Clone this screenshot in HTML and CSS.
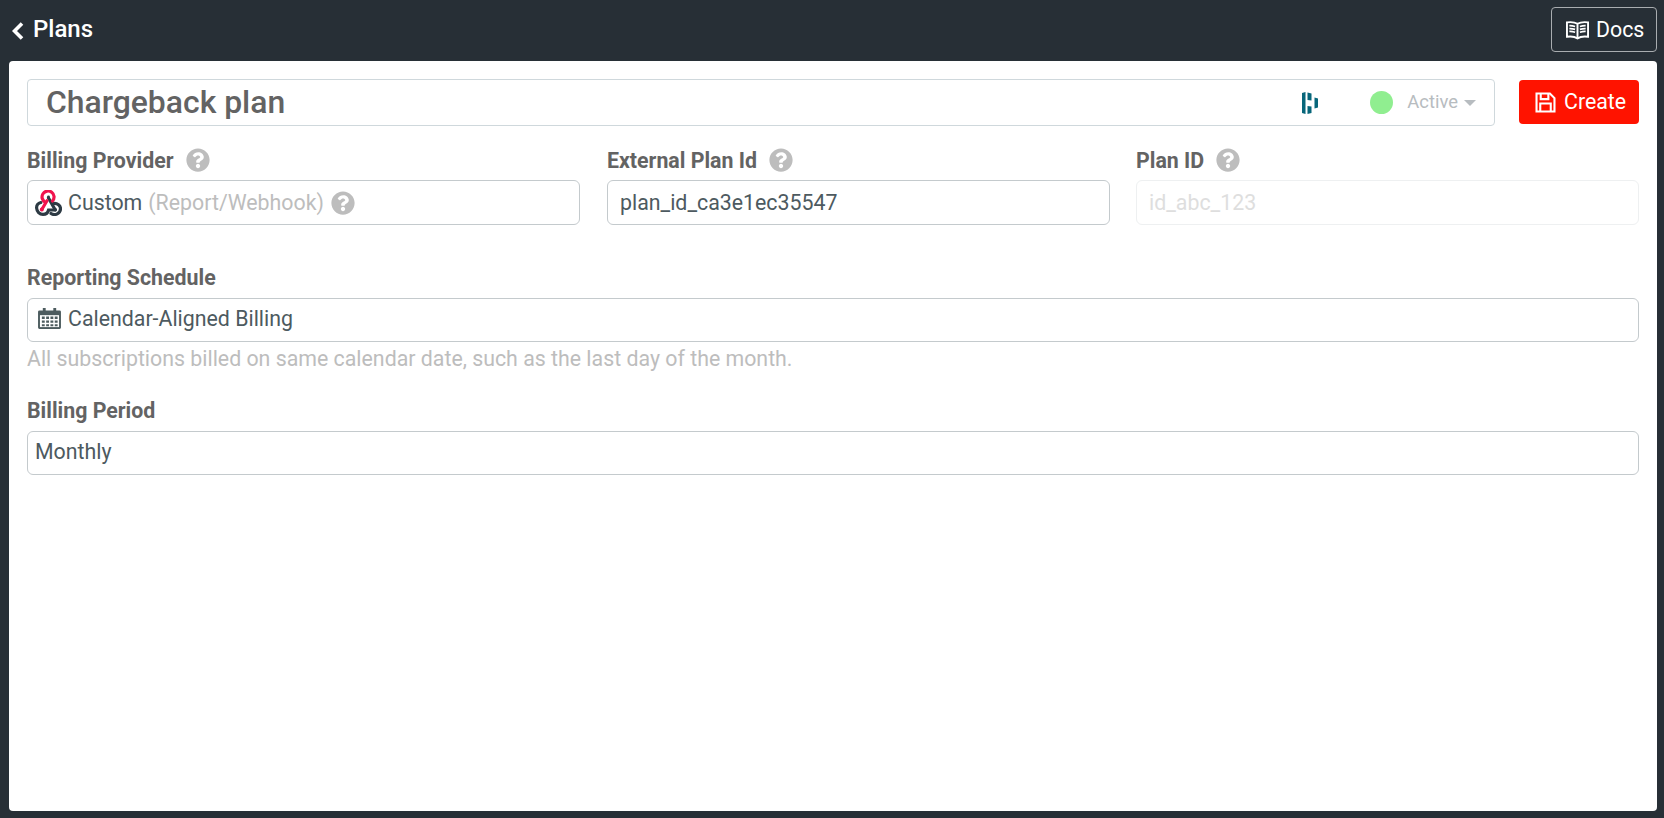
FILE: index.html
```html
<!DOCTYPE html>
<html lang="en">
<head>
<meta charset="utf-8">
<title>Chargeback plan</title>
<link rel="stylesheet" href="styles.css">
</head>
<body>
<svg class="defs" width="0" height="0" aria-hidden="true">
  <symbol id="q" viewBox="0 0 512 512"><path d="M504 256c0 136.997-111.043 248-248 248S8 392.997 8 256C8 119.083 119.043 8 256 8s248 111.083 248 248zM262.655 90c-54.497 0-89.255 22.957-116.549 63.758-3.536 5.286-2.353 12.415 2.715 16.258l34.699 26.31c5.205 3.947 12.621 3.008 16.665-2.122 17.864-22.658 30.113-35.797 57.303-35.797 20.429 0 45.698 13.148 45.698 32.958 0 14.976-12.363 22.667-32.534 33.976C247.128 238.528 216 254.941 216 296v4c0 6.627 5.373 12 12 12h56c6.627 0 12-5.373 12-12v-1.333c0-28.462 83.186-29.647 83.186-106.667 0-58.002-60.165-102-116.531-102zM256 338c-25.365 0-46 20.635-46 46 0 25.364 20.635 46 46 46s46-20.636 46-46c0-25.365-20.635-46-46-46z"/></symbol>
</svg>
<header class="topbar">
  <a class="back">
    <svg class="chev" viewBox="0 0 12 18"><path d="M10 1.500 2.500 9l7.500 7.500" fill="none" stroke="#fff" stroke-width="3.600"/></svg>
    <span>Plans</span>
  </a>
  <button class="docs">
    <svg class="book" viewBox="0 0 24 20" fill="none" stroke="#fff">
      <path d="M12 3.500C9.500 2 5 1.500 1 2v15c4-.5 8.500 0 11 1.800 2.500-1.800 7-2.300 11-1.800V2c-4-.5-8.500 0-11 1.500zM12 3.500v15" stroke-width="2"/>
      <path d="M3.500 5.500c2-.1 4 .2 6 .8M3.500 8.500c2-.1 4 .2 6 .8M3.500 11.500c2-.1 4 .2 6 .8M20.500 5.500c-2-.1-4 .2-6 .8M20.500 8.500c-2-.1-4 .2-6 .8M20.500 11.500c-2-.1-4 .2-6 .8" stroke-width="1.800"/>
    </svg>
    <span>Docs</span>
  </button>
</header>
<main class="card">
  <div class="title-row">
    <div class="title-box">
      <span class="title">Chargeback plan</span>
      <svg class="dash-logo" viewBox="0 0 16 22" fill="#07667a">
        <path d="M0 1l3.500-1v22L0 21z"/>
        <path d="M5.500 .5l4 1v7l-4-.5zM5.500 14l4 .5v6.500l-4 1z"/>
        <path d="M12.500 5.500l3.500 1v9l-3.500 1z"/>
      </svg>
      <span class="dot"></span>
      <span class="status">Active</span>
      <span class="caret"></span>
    </div>
    <button class="create">
      <svg class="save" viewBox="0 0 22 22" fill="none" stroke="#fff" stroke-width="2.200">
        <path d="M1.600 1.600h14l4.800 4.800v14H1.600z"/>
        <path d="M6 2v5.500h8V2M5.500 20v-8h11v8"/>
      </svg>
      <span class="create-text">Create</span>
    </button>
  </div>

  <div class="id-row">
    <div class="field">
      <div class="label"><span>Billing Provider</span><svg class="help"><use href="#q"/></svg></div>
      <div class="input">
        <svg class="hook" viewBox="0 0 27 26" fill="none" stroke-width="3.200" stroke-linecap="round">
          <path d="M5.800 12.500C3 13 1.500 15.500 1.600 18c.2 3.500 3 6.400 6.400 6.400 3 0 5-2 5.600-4.400H20" stroke="#2d3a44"/>
          <path d="M13.500 8l6.500 11.500M18.500 13.500c4-.5 7 2 7 5.300 0 4.500-5.500 7.300-9.500 4.700" stroke="#2d3a44"/>
          <circle cx="20.300" cy="19.800" r="1.700" fill="#2d3a44" stroke="none"/>
          <path d="M6.800 19.500 12 10.800" stroke="#f0134d"/>
          <path d="M10.300 12.300A6 6 0 1 1 17.500 11" stroke="#f0134d"/>
          <circle cx="13.500" cy="7" r="1.400" fill="#2d3a44" stroke="none"/>
          <circle cx="6.800" cy="19.500" r="2" fill="#f0134d" stroke="none"/>
        </svg>
        <span>Custom</span><span class="muted">(Report/Webhook)</span><svg class="help inline-help"><use href="#q"/></svg>
      </div>
    </div>
    <div class="field external">
      <div class="label"><span>External Plan Id</span><svg class="help"><use href="#q"/></svg></div>
      <div class="input pad-text">plan_id_ca3e1ec35547</div>
    </div>
    <div class="field">
      <div class="label"><span>Plan ID</span><svg class="help"><use href="#q"/></svg></div>
      <div class="input pad-text disabled">id_abc_123</div>
    </div>
  </div>

  <div class="field schedule">
    <div class="label"><span>Reporting Schedule</span></div>
    <div class="input short">
      <svg class="cal" viewBox="0 0 24 22">
        <path fill="#4d5c5f" d="M5 0h3v2.500h8V0h3v2.500h3.500A1.500 1.500 0 0 1 24 4v16.500a1.500 1.500 0 0 1-1.500 1.500h-21A1.500 1.500 0 0 1 0 20.500V4a1.500 1.500 0 0 1 1.500-1.500H5z"/>
        <path fill="#fff" d="M2 7.500h20V20H2z"/>
        <path fill="#4d5c5f" d="M4 9h3v2.500H4zM8.500 9h3v2.500h-3zM13 9h3v2.500h-3zM17.500 9h3v2.500h-3zM4 13h3v2.500H4zM8.500 13h3v2.500h-3zM13 13h3v2.500h-3zM17.500 13h3v2.500h-3zM4 17h3v2H4zM8.500 17h3v2h-3zM13 17h3v2h-3zM17.500 17h3v2h-3z"/>
      </svg>
      <span>Calendar-Aligned Billing</span>
    </div>
    <div class="hint">All subscriptions billed on same calendar date, such as the last day of the month.</div>
  </div>

  <div class="field period">
    <div class="label"><span>Billing Period</span></div>
    <div class="input short">Monthly</div>
  </div>
</main>
</body>
</html>
```

FILE: styles.css
```css
* { box-sizing: border-box; }
html, body { height: 100%; }
body {
  margin: 0;
  background: #272f36;
  font-family: Roboto, "Liberation Sans", sans-serif;
  color: #4d5a60;
  display: flex;
  flex-direction: column;
  overflow: hidden;
}
.defs { position: absolute; }
.topbar {
  height: 61px;
  flex: none;
  display: flex;
  align-items: flex-start;
  justify-content: space-between;
  padding: 7px 7px 0 12px;
}
.back {
  display: flex;
  align-items: center;
  height: 43px;
  color: #fff;
  font-size: 24px;
  font-weight: 500;
  gap: 9px;
}
.chev { width: 12px; height: 18px; margin-top: 5px; }
.docs {
  width: 106px;
  height: 45px;
  background: transparent;
  border: 1px solid #a9adb0;
  border-radius: 4px;
  color: #fff;
  font: 400 21.33px Roboto, sans-serif;
  display: flex;
  align-items: center;
  gap: 7px;
  padding: 0 0 0 14px;
}
.book { width: 23px; height: 20px; flex: none; }
.card {
  flex: 1;
  margin: 0 7px 7px 9px;
  background: #fff;
  border-radius: 4px;
  padding: 18px;
}
.title-row { display: flex; gap: 24px; align-items: flex-start; }
.title-box {
  flex: 1;
  height: 47px;
  border: 1px solid #cfd8dc;
  border-radius: 4px;
  display: flex;
  align-items: center;
  padding: 0 18px;
}
.title {
  font-size: 31.9px;
  font-weight: 500;
  color: #636363;
  flex: 1;
  margin-top: -2px;
}
.dash-logo { width: 16px; height: 22px; margin-right: 52px; }
.dot { width: 23px; height: 23px; border-radius: 50%; background: #90ee90; margin-right: 14px; }
.status { font-size: 18.4px; color: #b7bcc0; margin: -2px 6px 0 0; }
.caret {
  width: 0;
  height: 0;
  border: 6px solid transparent;
  border-top-color: #b7bcc0;
  border-bottom: 0;
}
.create {
  width: 120px;
  height: 44px;
  margin-top: 1px;
  background: #ff1300;
  border: 0;
  border-radius: 4px;
  color: #fff;
  font: 400 21.33px Roboto, sans-serif;
  display: flex;
  align-items: center;
  gap: 8px;
  padding: 0 0 0 16px;
}
.create-text { margin-top: -2px; }
.save { width: 21px; height: 21px; flex: none; }
.id-row {
  display: grid;
  grid-template-columns: 553px 504px 1fr;
  gap: 26px;
  margin-top: 19px;
}
.external { margin-left: 1px; }
.label {
  display: flex;
  align-items: center;
  height: 30px;
  font-size: 21.33px;
  font-weight: 700;
  color: #636363;
  gap: 12px;
  margin-bottom: 5px;
}
.help { width: 24px; height: 24px; fill: #bdbdbd; flex: none; }
.input {
  height: 45px;
  border: 1px solid #c4cacd;
  border-radius: 6px;
  display: flex;
  align-items: center;
  padding: 0 7px;
  font-size: 21.33px;
  background: #fff;
}
.short { height: 44px; padding-bottom: 3px; }
.pad-text { padding: 0 12px; }
.disabled { border-color: #eef0f1; color: #dedede; }
.muted { color: #bdbdbd; margin-left: 6px; }
.inline-help { margin-left: 7px; }
.hook { width: 27px; height: 26px; margin-right: 6px; flex: none; }
.cal { width: 23px; height: 21px; margin: 0 7px 0 3px; flex: none; }
.schedule { margin-top: 37px; }
.schedule .label, .period .label { margin-bottom: 6px; }
.hint { font-size: 21.33px; color: #bdbdbd; margin-top: 4px; line-height: 25px; }
.period { margin-top: 24px; }
```
